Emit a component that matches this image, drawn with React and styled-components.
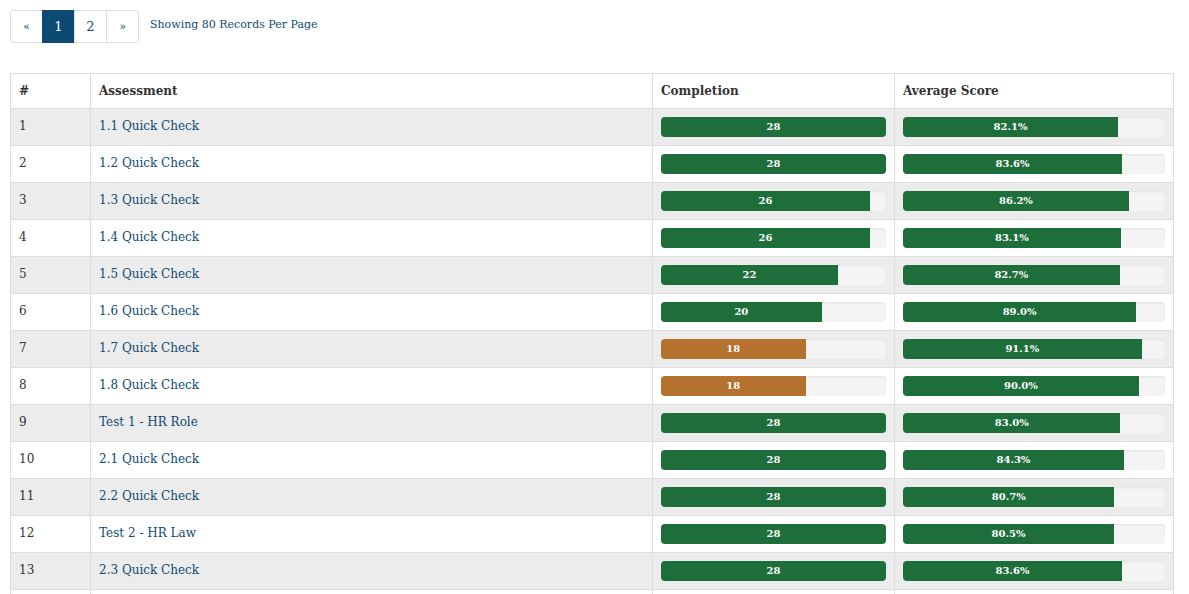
import React from 'react'
import styled, { createGlobalStyle } from 'styled-components'

const GlobalStyle = createGlobalStyle`
  body {
    margin: 0;
    background: #fff;
    font-family: 'DejaVu Serif', 'Liberation Serif', serif;
    color: #333;
  }
`

const Page = styled.div`
  padding: 10px;
`

const Toolbar = styled.div`
  display: flex;
  align-items: center;
  margin-bottom: 30px;
`

const Pager = styled.ul`
  display: flex;
  list-style: none;
  margin: 0;
  padding: 0;
`

const PageButton = styled.li`
  width: 33px;
  height: 33px;
  box-sizing: border-box;
  display: flex;
  align-items: center;
  justify-content: center;
  font-size: ${({ small }) => (small ? '11px' : '13px')};
  color: ${({ active }) => (active ? '#fff' : '#0e4a73')};
  background: ${({ active }) => (active ? '#0c4a74' : '#fff')};
  border: 1px solid ${({ active }) => (active ? '#0c4a74' : '#ddd')};
  margin-left: -1px;
  &:first-child {
    margin-left: 0;
    border-radius: 3px 0 0 3px;
  }
  &:last-child {
    border-radius: 0 3px 3px 0;
  }
`

const Showing = styled.span`
  margin-left: 11px;
  margin-top: -5px;
  font-size: 11px;
  color: #0e4a73;
`

const Table = styled.table`
  width: 1163px;
  border-collapse: collapse;
  table-layout: fixed;
  font-size: 12px;
`

const HeadCell = styled.th`
  text-align: left;
  font-weight: bold;
  color: #333;
  padding: 8px;
  line-height: 18px;
  border: 1px solid #ddd;
`

const Row = styled.tr`
  background: ${({ striped }) => (striped ? '#ececec' : '#fff')};
`

const Cell = styled.td`
  padding: 8px;
  line-height: 18px;
  height: 20px;
  vertical-align: top;
  border: 1px solid #ddd;
`

const Link = styled.a`
  color: #0e4a73;
  text-decoration: none;
`

const Progress = styled.div`
  height: 20px;
  background: #f4f4f4;
  border-radius: 4px;
  overflow: hidden;
  box-shadow: inset 0 1px 2px rgba(0, 0, 0, 0.08);
`

const Fill = styled.div`
  height: 100%;
  background: ${({ warn }) => (warn ? '#b5722e' : '#1d6e3b')};
  color: #fff;
  font-size: 10px;
  font-weight: bold;
  line-height: 20px;
  text-align: center;
  white-space: nowrap;
`

const rows = [
  ['1.1 Quick Check', 28, 82.1],
  ['1.2 Quick Check', 28, 83.6],
  ['1.3 Quick Check', 26, 86.2],
  ['1.4 Quick Check', 26, 83.1],
  ['1.5 Quick Check', 22, 82.7],
  ['1.6 Quick Check', 20, 89.0],
  ['1.7 Quick Check', 18, 91.1],
  ['1.8 Quick Check', 18, 90.0],
  ['Test 1 - HR Role', 28, 83.0],
  ['2.1 Quick Check', 28, 84.3],
  ['2.2 Quick Check', 28, 80.7],
  ['Test 2 - HR Law', 28, 80.5],
  ['2.3 Quick Check', 28, 83.6],
  ['2.4 Quick Check', 28, 84.0],
]

const App = () => {
  return (
    <Page>
      <GlobalStyle />
      <Toolbar>
        <Pager>
          <PageButton small>«</PageButton>
          <PageButton active>1</PageButton>
          <PageButton>2</PageButton>
          <PageButton small>»</PageButton>
        </Pager>
        <Showing>Showing 80 Records Per Page</Showing>
      </Toolbar>
      <Table>
        <colgroup>
          <col style={{ width: 80 }} />
          <col style={{ width: 562 }} />
          <col style={{ width: 242 }} />
          <col style={{ width: 279 }} />
        </colgroup>
        <thead>
          <tr>
            <HeadCell>#</HeadCell>
            <HeadCell>Assessment</HeadCell>
            <HeadCell>Completion</HeadCell>
            <HeadCell>Average Score</HeadCell>
          </tr>
        </thead>
        <tbody>
          {rows.map(([name, done, score], i) => (
            <Row key={name} striped={i % 2 === 0}>
              <Cell>{i + 1}</Cell>
              <Cell>
                <Link href="#">{name}</Link>
              </Cell>
              <Cell>
                <Progress>
                  <Fill warn={done < 20} style={{ width: `${(done / 28) * 100}%` }}>
                    {done}
                  </Fill>
                </Progress>
              </Cell>
              <Cell>
                <Progress>
                  <Fill style={{ width: `${score}%` }}>{score.toFixed(1)}%</Fill>
                </Progress>
              </Cell>
            </Row>
          ))}
        </tbody>
      </Table>
    </Page>
  )
}

export default App
